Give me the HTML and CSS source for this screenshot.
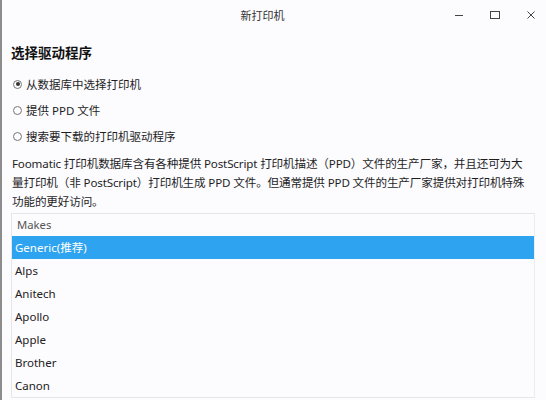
FILE: index.html
```
<!DOCTYPE html>
<html lang="zh-CN">
<head>
    <meta charset="UTF-8" />
    <meta name="viewport" content="width=device-width, initial-scale=1" />
    <title>新打印机</title>
    <link rel="stylesheet" href="styles.css">
</head>
<body>
    <div class="window">
        <div class="titlebar">
            <span class="title">新打印机</span>
            <div class="controls">
                <svg class="ctl" width="12" height="12" viewBox="0 0 12 12"><path d="M2 6.5h8" stroke="#444" stroke-width="1"/></svg>
                <svg class="ctl" width="12" height="12" viewBox="0 0 12 12"><rect x="1.5" y="2.5" width="9" height="7" fill="none" stroke="#444" stroke-width="1"/></svg>
                <svg class="ctl" width="12" height="12" viewBox="0 0 12 12"><path d="M2.5 2.5l7 7M9.5 2.5l-7 7" stroke="#444" stroke-width="1"/></svg>
            </div>
        </div>

        <div class="content">
            <h1>选择驱动程序</h1>

            <div class="choices">
                <label class="choice"><span class="radio checked"></span>从数据库中选择打印机</label>
                <label class="choice"><span class="radio"></span>提供 PPD 文件</label>
                <label class="choice"><span class="radio"></span>搜索要下载的打印机驱动程序</label>
            </div>

            <p class="desc">Foomatic 打印机数据库含有各种提供 PostScript 打印机描述（PPD）文件的生产厂家，并且还可为大量打印机（非 PostScript）打印机生成 PPD 文件。但通常提供 PPD 文件的生产厂家提供对打印机特殊功能的更好访问。</p>

            <div class="makes">
                <div class="makes-head">Makes</div>
                <div class="row selected">Generic(推荐)</div>
                <div class="row">Alps</div>
                <div class="row">Anitech</div>
                <div class="row">Apollo</div>
                <div class="row">Apple</div>
                <div class="row">Brother</div>
                <div class="row">Canon</div>
            </div>
        </div>
    </div>
</body>
</html>
```

FILE: styles.css
```
html, body {
    margin: 0;
    height: 100%;
    overflow: hidden;
}

body {
    background: #fcfbfe;
    font-family: "Noto Sans", "Noto Sans CJK SC", sans-serif;
    color: #1e1e1e;
}

.window {
    height: 100%;
    border-left: 2px solid #8c8c8c;
    box-sizing: border-box;
}

/* title bar */
.titlebar {
    height: 32px;
    display: flex;
    align-items: center;
}

.title {
    flex: 1;
    text-align: center;
    font-size: 11px;
    color: #333;
    padding-left: 70px;
    margin-top: -2px;
}

.controls {
    display: flex;
    gap: 24px;
    padding-right: 9px;
    margin-top: -3px;
}

.ctl {
    display: block;
}

/* body */
.content {
    padding: 0 11px 0 9px;
}

h1 {
    margin: 11px 0 0;
    font-size: 13.5px;
    line-height: 20px;
    font-weight: bold;
    color: #111;
}

.choices {
    margin-top: 8px;
}

.choice {
    display: flex;
    align-items: center;
    height: 26px;
    font-size: 11.5px;
    gap: 4px;
}

.radio {
    width: 9px;
    height: 9px;
    margin-left: 2px;
    border: 1px solid #777;
    border-radius: 50%;
    box-sizing: border-box;
    position: relative;
}

.radio.checked::after {
    content: "";
    position: absolute;
    left: 1.5px;
    top: 1.5px;
    width: 4px;
    height: 4px;
    border-radius: 50%;
    background: #333;
}

.desc {
    margin: 5px 0 0;
    padding: 0 3.5px 0 1px;
    font-size: 11.6px;
    letter-spacing: -0.15px;
    line-height: 19px;
}

.makes {
    margin-top: 2px;
    border: 1px solid #e6e6e8;
    border-right-color: #ececee;
}

.makes-head {
    height: 22px;
    line-height: 22px;
    padding-left: 5px;
    font-size: 11.3px;
    color: #555;
}

.row {
    height: 23px;
    line-height: 23px;
    padding-left: 3px;
    font-size: 11.5px;
    color: #222;
}

.row.selected {
    background: #2ea3f0;
    color: #fff;
}
```
